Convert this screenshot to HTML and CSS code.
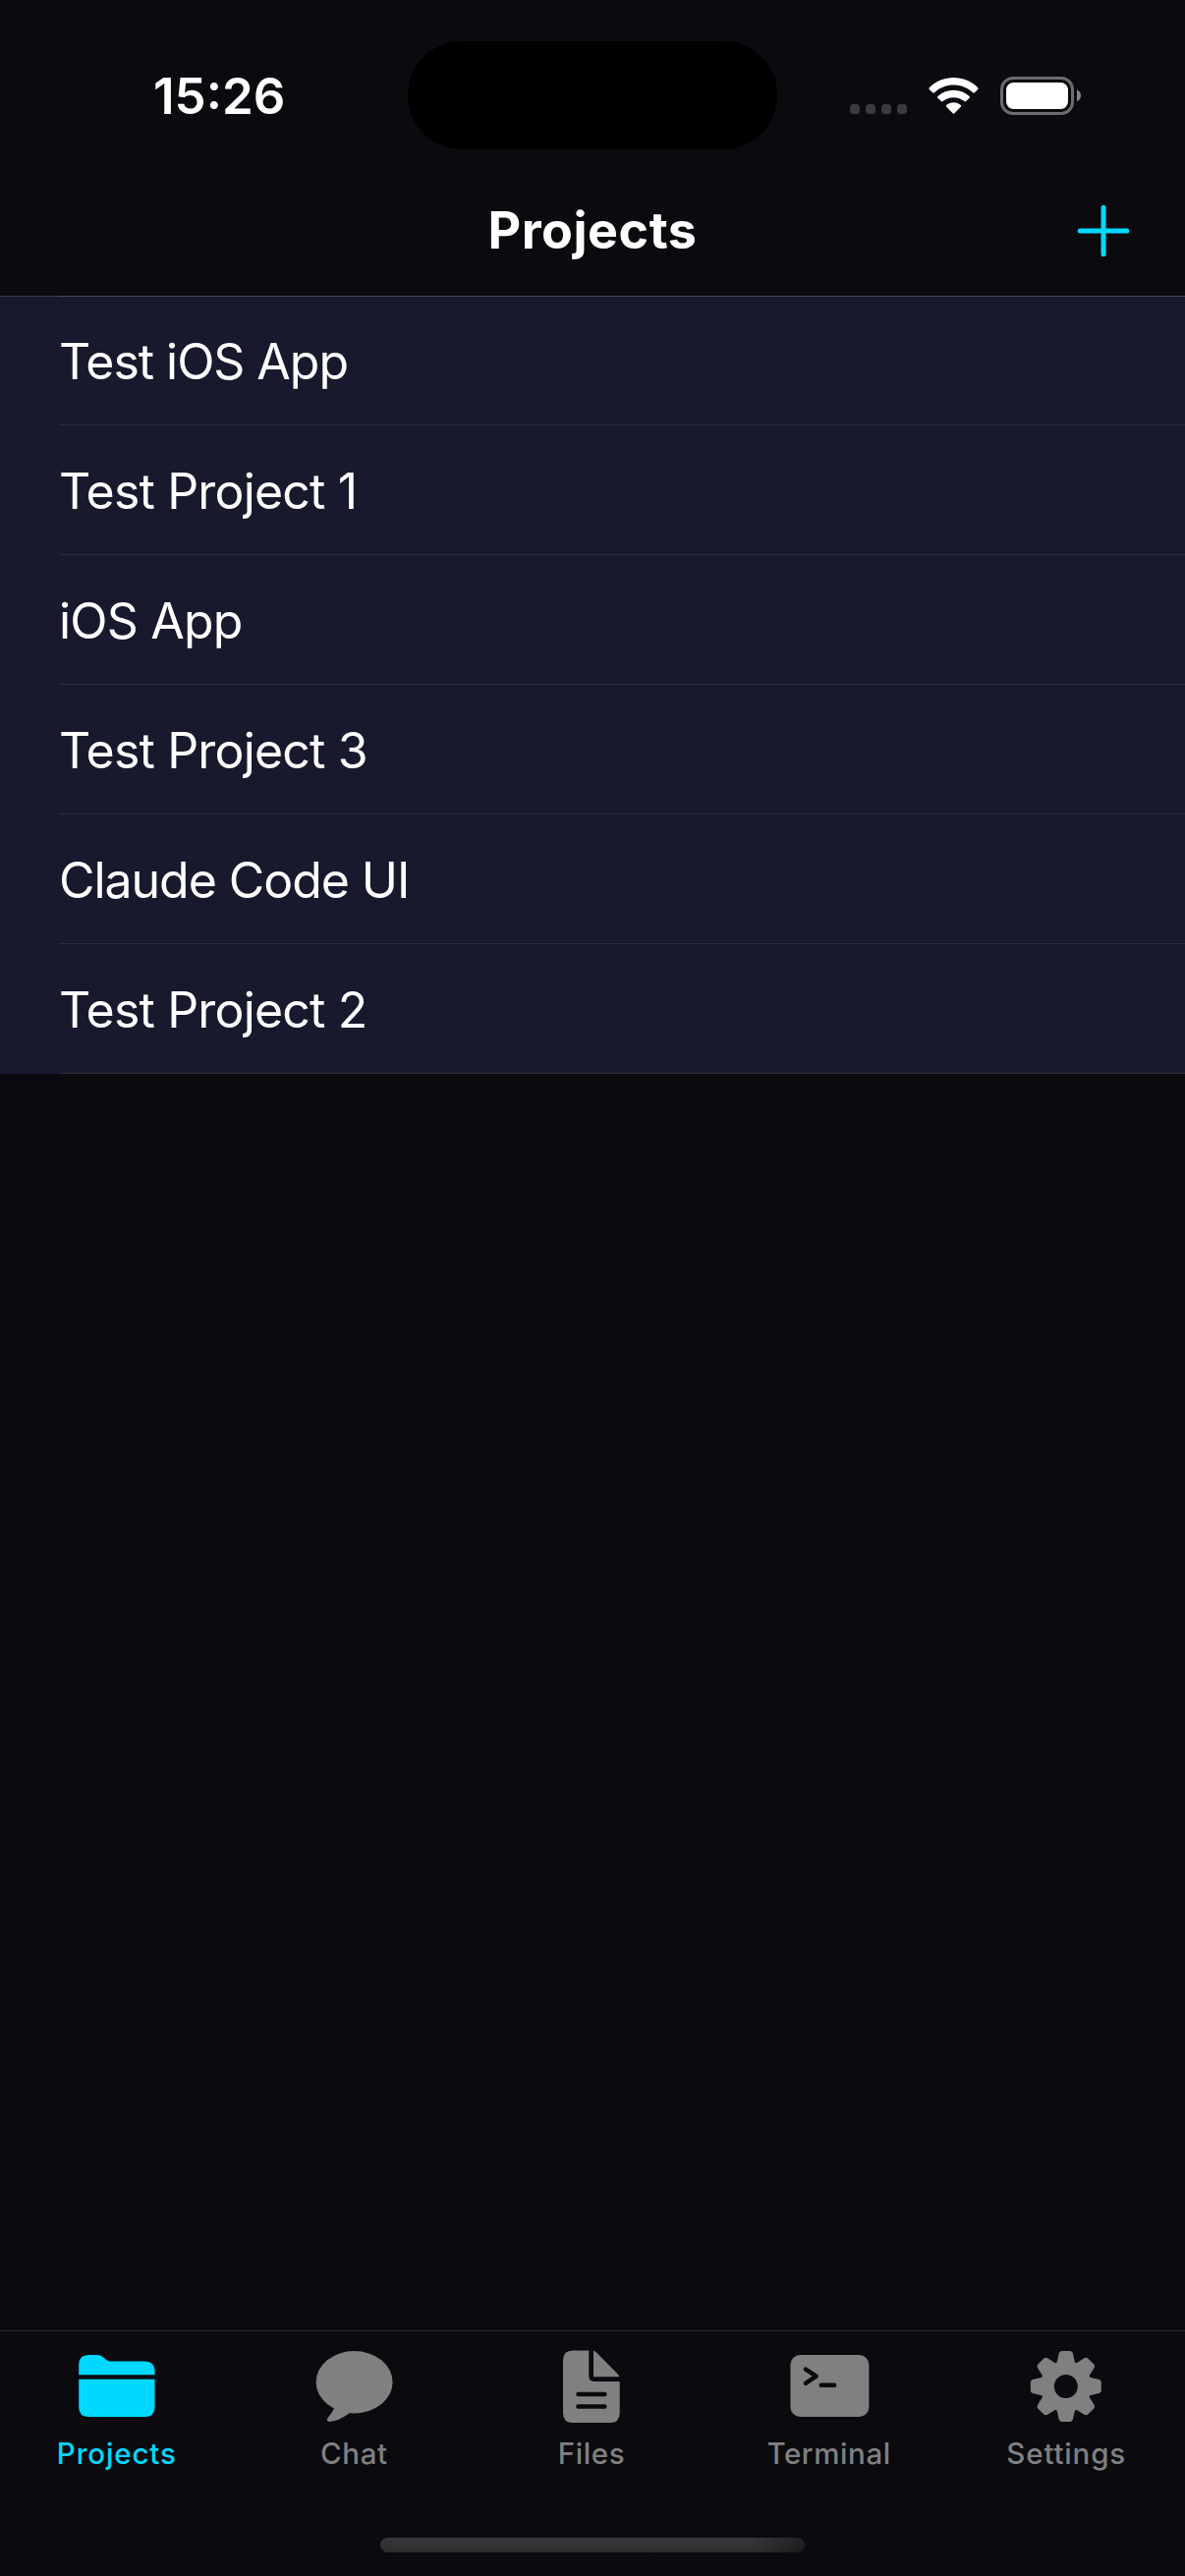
FILE: index.html
```html
<!DOCTYPE html>
<html lang="en">
<head>
<meta charset="utf-8">
<title>Projects</title>
<link rel="stylesheet" href="styles.css">
</head>
<body>
<div class="screen">
  <header class="status-bar">
    <div class="status-left"><span class="time">15:26</span></div>
    <div class="island"></div>
    <div class="status-right">
      <div class="cell-dots"><i></i><i></i><i></i><i></i></div>
      <svg class="wifi" width="51" height="38" viewBox="0 0 51 38" fill="#fff">
        <path d="M.8 10.200C14-3.400 37-3.400 50.200 10.200q.8.900 0 1.800l-3.400 3.300q-.8.700-1.700 0C33.800 5 17.200 5 5.900 15.300q-.9.700-1.700 0L.8 12q-.8-.9 0-1.800z"/>
        <path d="M9.400 19C18.500 10.600 32.500 10.600 41.600 19q.8.900 0 1.800l-3.500 3.300q-.8.700-1.600 0C30.200 19 20.800 19 14.500 24.100q-.8.700-1.600 0L9.400 20.800q-.8-.9 0-1.800z"/>
        <path d="M18.200 28C22.500 24.400 28.500 24.400 32.800 28q.8.900 0 1.700l-6.400 6.600q-.9.800-1.800 0l-6.400-6.600q-.8-.8 0-1.700z"/>
      </svg>
      <svg class="battery" width="82" height="39" viewBox="0 0 82 39">
        <rect x="1.500" y="1.500" width="72" height="36" rx="11.500" fill="none" stroke="#6c6c6e" stroke-width="3"/>
        <rect x="6" y="6" width="63" height="27" rx="7.500" fill="#fff"/>
        <path d="M78 13.300q4 2 4 6t-4 6z" fill="#85858a"/>
      </svg>
    </div>
  </header>

  <nav class="nav-bar">
    <h1 class="nav-title">Projects</h1>
    <button class="add" aria-label="Add project">
      <svg width="54" height="54" viewBox="0 0 54 54" stroke="#00d9ff" stroke-width="5" stroke-linecap="round"><path d="M27 3.200v47.600M3.200 27h47.600"/></svg>
    </button>
  </nav>

  <main class="content">
    <ul class="list">
      <li class="row"><span class="name tight">Test iOS App</span></li>
      <li class="row"><span class="name">Test Project 1</span></li>
      <li class="row"><span class="name">iOS App</span></li>
      <li class="row"><span class="name">Test Project 3</span></li>
      <li class="row"><span class="name tight">Claude Code UI</span></li>
      <li class="row"><span class="name">Test Project 2</span></li>
    </ul>
  </main>

  <footer class="tab-bar">
    <div class="tabs">
      <div class="tab active">
        <svg class="icon" viewBox="0 0 90 80"><path d="M6.200 27.300V17q0-10 10-10H25c6.500 0 8 6.600 14 6.600H73q10.500 0 10.500 10.500v3.200zM6.200 31.700H83.500V60q0 10-10 10H16.200q-10 0-10-10z"/></svg>
        <span class="label wide">Projects</span>
      </div>
      <div class="tab">
        <svg class="icon" viewBox="0 0 90 80"><ellipse cx="45.600" cy="34.700" rx="39" ry="31.700"/><path d="M24.600 60Q25.400 61.700 24 63.500Q22 67 18.600 71Q16.500 74.500 20.300 75Q29 74.800 40.600 66.300L45 55L24 50z"/></svg>
        <span class="label">Chat</span>
      </div>
      <div class="tab">
        <svg class="icon" viewBox="0 0 90 80"><path d="M42.300 2.500H26q-10 0-10 10V66q0 10 10 10H63.700q10 0 10-10V34H48q-5.700 0-5.700-5.500zM47 2.500q1.500.3 3 2L71.500 26.300q1.600 1.700 1.700 3H47z"/><path class="cut" d="M31.400 47H58.400M31.400 59.500H58.400"/></svg>
        <span class="label">Files</span>
      </div>
      <div class="tab">
        <svg class="icon" viewBox="0 0 90 80"><rect x="5.400" y="7" width="80" height="63" rx="10"/><path class="cut" d="M20.900 21.600L31.700 28.700L20.900 35.800M36.700 37.700H50.200"/></svg>
        <span class="label">Terminal</span>
      </div>
      <div class="tab">
        <svg class="icon" viewBox="0 0 90 80"><g transform="translate(44.800 39)">
          <circle r="19" fill="none" stroke="#808080" stroke-width="14"/>
          <path id="tooth" d="M-9.500-23L-7.200-33Q-6.500-36-4-36H4Q6.500-36 7.200-33L9.500-23z"/>
          <use href="#tooth" transform="rotate(45)"/><use href="#tooth" transform="rotate(90)"/><use href="#tooth" transform="rotate(135)"/><use href="#tooth" transform="rotate(180)"/><use href="#tooth" transform="rotate(225)"/><use href="#tooth" transform="rotate(270)"/><use href="#tooth" transform="rotate(315)"/>
        </g></svg>
        <span class="label wide">Settings</span>
      </div>
    </div>
    <div class="home-indicator"></div>
  </footer>
</div>
</body>
</html>
```
FILE: styles.css
```css
* { box-sizing: border-box; }
body { margin: 0; background: #0a0a0f; }
.screen {
  width: 1206px;
  height: 2622px;
  display: flex;
  flex-direction: column;
  overflow: hidden;
  background: #0a0a0f;
  color: #fff;
  font-family: Inter, "Liberation Sans", sans-serif;
}
.status-bar {
  height: 177px;
  display: grid;
  grid-template-columns: 415px 376px 415px;
  padding-top: 42px;
}
.status-left { height: 112px; padding-left: 156px; display: flex; align-items: center; }
.time { font-size: 51px; font-weight: 600; line-height: 60px; letter-spacing: 0; }
.island { height: 110px; border-radius: 55px; background: #000; }
.status-right { display: flex; align-items: flex-start; padding: 36px 0 0 74px; }
.cell-dots { display: flex; gap: 6px; margin-top: 28px; }
.cell-dots i { width: 10px; height: 10px; border-radius: 3.5px; background: #3b3b3f; }
.wifi { margin: 1px 22px 0 22px; }
.nav-bar {
  height: 124px;
  display: grid;
  grid-template-columns: 1fr auto 1fr;
  align-items: center;
}
.nav-title { grid-column: 2; margin: 0 0 9px; font-size: 52px; font-weight: 700; line-height: 60px; letter-spacing: 0.5px; }
.add { justify-self: end; margin: 0 56px 9px 0; padding: 0; border: 0; background: none; display: flex; }
.content { flex: 1; }
.list {
  margin: 0;
  padding: 0;
  list-style: none;
  background: linear-gradient(90deg, #3b3b47 60px, #4a4a57 60px) top / 100% 1px no-repeat #18192c;
}
.row { height: 132px; padding-left: 60px; }
.name {
  height: 132px;
  display: flex;
  align-items: center;
  padding-top: 2px;
  border-bottom: 1px solid #2b2b3c;
  font-size: 50px;
  letter-spacing: -0.82px;
}
.name.tight { letter-spacing: -1.05px; }
.tab-bar { height: 250px; border-top: 1px solid #2b2b2f; display: flex; flex-direction: column; align-items: center; }
.tabs { width: 1208px; height: 210px; margin-left: -2px; display: grid; grid-template-columns: repeat(5, 1fr); align-self: flex-start; }
.tab { display: flex; flex-direction: column; align-items: center; padding-top: 17px; color: #808080; }
.tab.active { color: #00d9ff; }
.icon { width: 90px; height: 80px; fill: currentColor; }
.cut { fill: none; stroke: #0a0a0f; stroke-width: 4.4px; stroke-linecap: round; stroke-linejoin: round; }
.label { margin-top: 9px; font-size: 29.5px; font-weight: 500; line-height: 36px; letter-spacing: 0.6px; }
.label.wide { letter-spacing: 0.85px; }
.home-indicator { width: 432px; height: 15px; border-radius: 7.5px; background: linear-gradient(90deg, transparent 88%, rgba(10, 10, 15, 0.5)), linear-gradient(#38383a, #2d2d2f); }
```
